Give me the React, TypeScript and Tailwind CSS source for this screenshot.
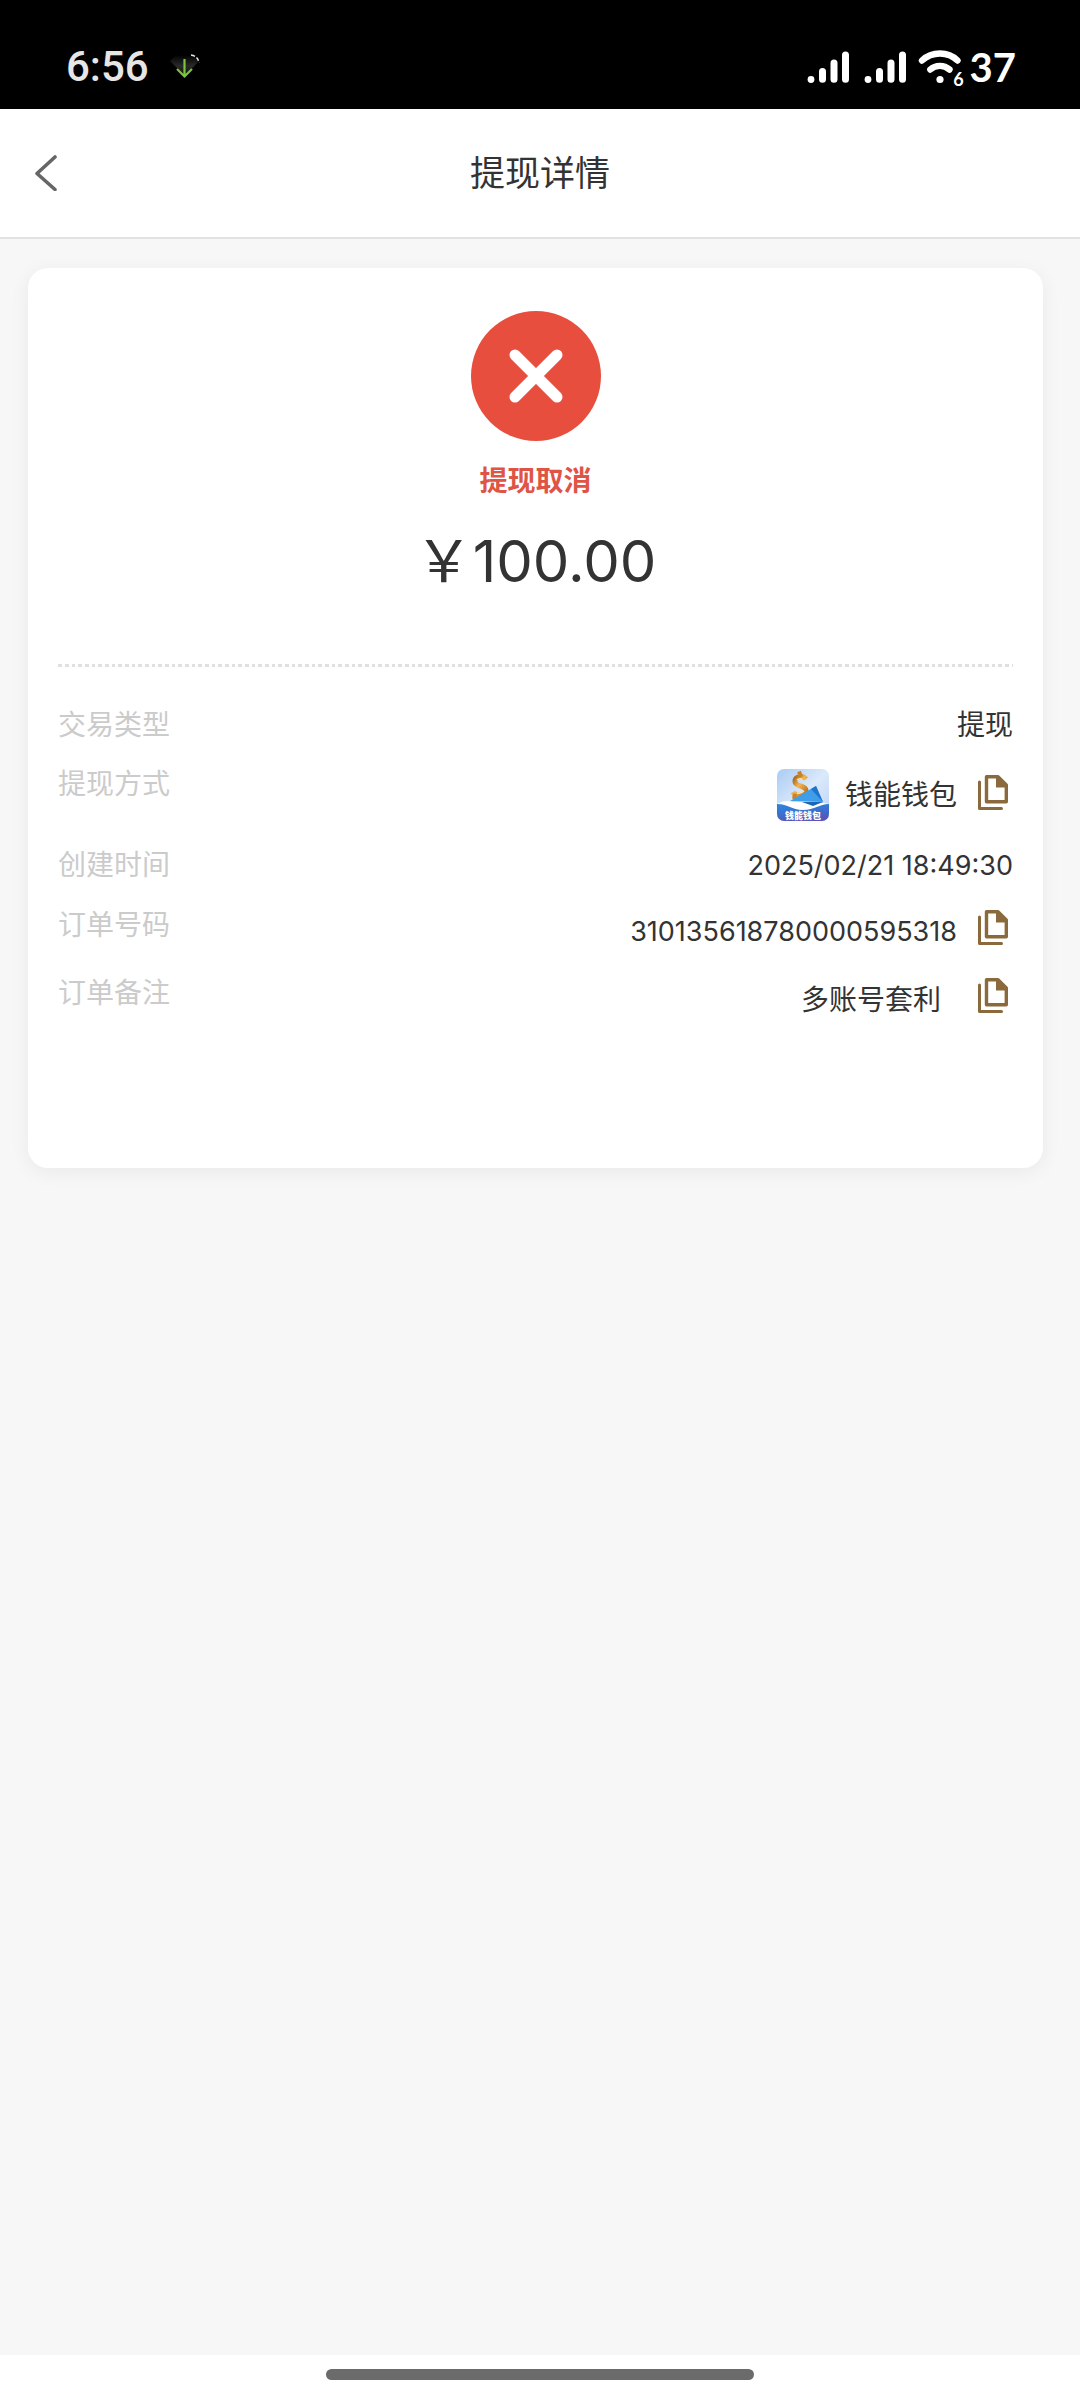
import type { ReactNode } from "react";

function SignalIcon() {
  return (
    <svg width="42" height="36" viewBox="0 0 42 36" fill="none" stroke="#fff" strokeWidth="7" strokeLinecap="round" aria-hidden="true">
      <circle cx="4" cy="30.5" r="3.4" fill="#fff" stroke="none" />
      <path d="M15.5 22.5V30.3M27 14V30.3M38.5 6V30.3" />
    </svg>
  );
}

function WifiIcon() {
  return (
    <svg width="44" height="38" viewBox="0 0 44 38" fill="none" stroke="#fff" strokeWidth="6.4" strokeLinecap="round" aria-hidden="true">
      <path d="M4 12.5C14 3.2 30 3.2 39.5 12.5" />
      <path d="M12.3 21.5C17.5 16.600 26 16.600 31.5 21.5" />
      <circle cx="22" cy="31.5" r="3.6" fill="#fff" stroke="none" />
    </svg>
  );
}

function DownloadIcon() {
  return (
    <svg width="32" height="28" viewBox="0 0 32 28" fill="none" aria-hidden="true">
      <defs>
        <linearGradient id="gem" x1="0" y1="0" x2="0" y2="1">
          <stop offset="0" stopColor="#050505" />
          <stop offset="0.5" stopColor="#2a2b28" />
          <stop offset="1" stopColor="#14160f" />
        </linearGradient>
      </defs>
      <path d="M1 8L6 3H25L30 8L16 23Z" fill="url(#gem)" />
      <path d="M22 2Q29 3 30 10" stroke="#e8e8e8" strokeWidth="1.5" strokeDasharray="4 2" />
      <path d="M15.5 6V23M8 16L15.5 23.5L23 16" stroke="#7cc43a" strokeWidth="2.2" />
    </svg>
  );
}

function WalletLogo() {
  return (
    <svg width="52" height="52" viewBox="0 0 52 52" aria-hidden="true">
      <defs>
        <linearGradient id="sky" x1="0" y1="0" x2="1" y2="1">
          <stop offset="0" stopColor="#a9cbf3" />
          <stop offset="0.5" stopColor="#dbe9fb" />
          <stop offset="1" stopColor="#b9d3f6" />
        </linearGradient>
        <linearGradient id="sea" x1="0" y1="0" x2="0.3" y2="1">
          <stop offset="0" stopColor="#2f86dd" />
          <stop offset="0.6" stopColor="#3a6fce" />
          <stop offset="1" stopColor="#5a55b8" />
        </linearGradient>
        <linearGradient id="gold" x1="0" y1="0" x2="1" y2="1">
          <stop offset="0" stopColor="#9a5a12" />
          <stop offset="0.45" stopColor="#f2b552" />
          <stop offset="1" stopColor="#b86c1a" />
        </linearGradient>
        <clipPath id="tile"><rect width="52" height="52" rx="7" /></clipPath>
      </defs>
      <g clipPath="url(#tile)">
        <rect width="52" height="52" fill="url(#sky)" />
        <path d="M0 35Q8 30 16 33L46 34L52 35V46H0Z" fill="#fff" />
        <path d="M29 10C26 6 18 7 18 12.500C18 18 29 16 29 21.500C29 27 19 28 16 23" fill="none" stroke="url(#gold)" strokeWidth="5" />
        <path d="M22 2.500L24 8M18 25L17 30" stroke="#c98228" strokeWidth="4" />
        <path d="M20 11Q22 9 25 10M20 24Q24 25 27 22" fill="none" stroke="#ffe3a0" strokeWidth="1.5" />
        <path d="M13 32L39 17L46 33Z" fill="#3f9eea" />
        <path d="M34 20L39 17L46 33Z" fill="#1f74cc" />
        <path d="M25 33L46 33L36 37Z" fill="#1a66b8" />
        <path d="M0 35C12 35 14 41 26 41C38 41 42 35 52 35V52H0Z" fill="url(#sea)" />
      </g>
      <text x="26" y="50" textAnchor="middle" fontSize="9" fontWeight="900" fill="#fff" className="font-['Noto_Sans_CJK_SC',sans-serif]">钱能钱包</text>
    </svg>
  );
}

function CopyButton({ label }: { label: string }) {
  return (
    <button type="button" aria-label={label} className="flex h-10 w-10 shrink-0 items-start justify-center">
      <svg width="30" height="35" viewBox="0 0 30 35" aria-hidden="true">
        <path d="M1.500 7V33.500H23.500" fill="none" stroke="#8a6a3c" strokeWidth="3" strokeLinecap="round" strokeLinejoin="round" />
        <path d="M8.500 1.800H20L28.300 10V26.700H8.500Z" fill="none" stroke="#8a6a3c" strokeWidth="3.400" strokeLinejoin="round" />
        <path d="M18 1H20.500L29.500 10V12.500H18Z" fill="#8a6a3c" />
      </svg>
    </button>
  );
}

function Row({ label, children }: { label: string; children: ReactNode }) {
  return (
    <div className="flex items-start justify-between">
      <dt className="text-[28px] leading-10 text-[#cbcbcb]">{label}</dt>
      <dd className="text-[28px] leading-10 text-[#333]">{children}</dd>
    </div>
  );
}

export default function App() {
  return (
    <div className="flex min-h-screen flex-col bg-[#f7f7f7] font-['Inter','Noto_Sans_CJK_SC',sans-serif]">
      <div className="flex h-[109px] items-center justify-between bg-black pt-6 pr-16 pl-[66px]">
        <div className="flex items-center gap-5">
          <span className="font-['Roboto',sans-serif] text-[42px] leading-[48px] font-medium text-[#e6e6e6]">6:56</span>
          <DownloadIcon />
        </div>
        <div className="flex items-center">
          <SignalIcon />
          <span className="w-[15px]" />
          <SignalIcon />
          <div className="relative ml-3">
            <WifiIcon />
            <span className="absolute -right-0.5 -bottom-0.5 font-['Lato',sans-serif] text-[18px] leading-[18px] font-bold text-white">6</span>
          </div>
          <span className="ml-2 font-['Lato',sans-serif] text-[40px] leading-[44px] font-bold text-white">37</span>
        </div>
      </div>

      <header className="grid h-[130px] grid-cols-[1fr_auto_1fr] items-center border-b-2 border-[#e2e2e2] bg-white px-8">
        <button type="button" aria-label="返回" className="flex h-12 w-12 items-center">
          <svg width="28" height="36" viewBox="0 0 28 36" fill="none" stroke="#666" strokeWidth="3.6" strokeLinecap="round" strokeLinejoin="round" aria-hidden="true">
            <path d="M23 2L5 18.500L23 34.500" />
          </svg>
        </button>
        <h1 className="text-[35px] leading-[48px] text-[#333]">提现详情</h1>
      </header>

      <main className="flex-1">
        <section className="mt-[29px] mr-[37px] ml-7 rounded-[20px] bg-white px-[30px] pt-[43px] pb-[146px] shadow-[0_4px_20px_rgba(0,0,0,0.06)]">
          <div className="flex flex-col items-center">
            <div className="flex h-[130px] w-[130px] items-center justify-center rounded-full bg-[#e84e3d]">
              <svg width="54" height="54" viewBox="0 0 54 54" stroke="#fff" strokeWidth="11" strokeLinecap="round" aria-hidden="true">
                <path d="M6 6L48 48M48 6L6 48" />
              </svg>
            </div>
            <p className="mt-5 text-[28px] leading-10 font-bold text-[#de5445]">提现取消</p>
            <p className="mt-7 text-[58px] leading-[64px] text-[#333]">￥100.00</p>
          </div>

          <div className="mt-[71px] h-[3px] bg-[repeating-linear-gradient(90deg,#e0e0e0_0_4px,transparent_4px_7px,#e0e0e0_7px_11px,transparent_11px_14px,#e0e0e0_14px_17px,transparent_17px_20px)]" />

          <dl className="mt-[38px] flex flex-col gap-[19px]">
            <Row label="交易类型">提现</Row>
            <Row label="提现方式">
              <div className="flex h-[62px] items-center gap-4">
                <WalletLogo />
                <span>钱能钱包</span>
                <CopyButton label="复制提现方式" />
              </div>
            </Row>
            <Row label="创建时间"><span className="text-[27px]">2025/02/21 18:49:30</span></Row>
            <Row label="订单号码">
              <div className="flex h-[49px] items-center gap-4">
                <span className="mt-1 text-[27px]">310135618780000595318</span>
                <CopyButton label="复制订单号码" />
              </div>
            </Row>
            <Row label="订单备注">
              <div className="flex h-[49px] items-center gap-8">
                <span className="mt-1">多账号套利</span>
                <CopyButton label="复制订单备注" />
              </div>
            </Row>
          </dl>
        </section>
      </main>

      <footer className="flex h-[45px] items-start justify-center bg-white pt-[14px]">
        <div className="h-[11px] w-[428px] rounded-full bg-[#6b6b6b]" />
      </footer>
    </div>
  );
}
